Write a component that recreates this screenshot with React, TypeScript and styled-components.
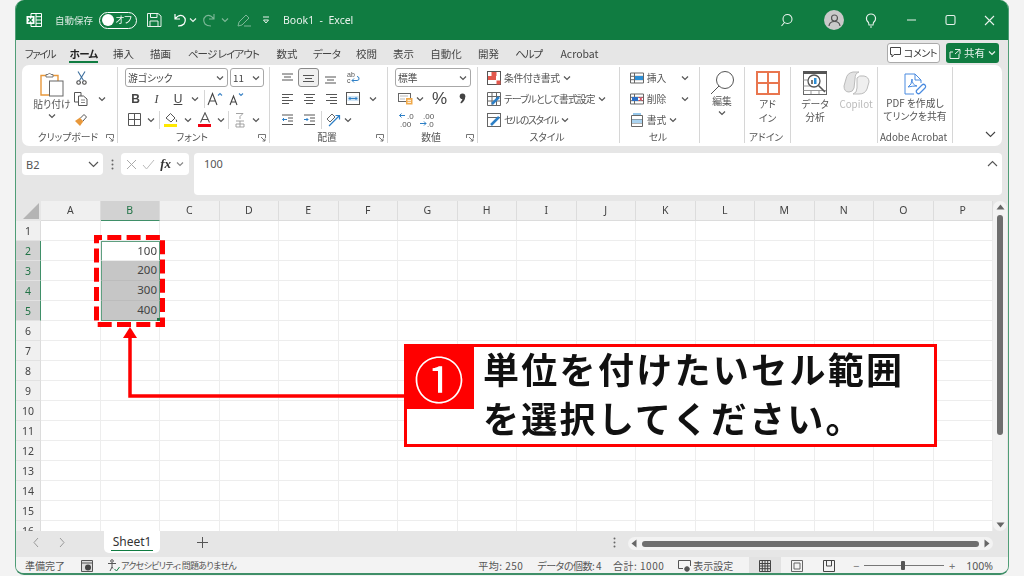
import React from "react";
import styled, { createGlobalStyle } from "styled-components";

const GlobalStyle = createGlobalStyle`
  html, body { margin: 0; padding: 0; width: 1024px; height: 576px; overflow: hidden; background: #f3f3f3; }
  body { font-family: "Noto Sans CJK JP", "Noto Sans", sans-serif; font-feature-settings: "palt"; color: #444; }
  * { box-sizing: border-box; }
`;

const Page = styled.div`position: relative; width: 1024px; height: 576px; overflow: hidden; padding-left: 15px;`;
const Win = styled.div`
  width: 994px; height: 575px; display: flex; flex-direction: column; background: #e6e6e6;
  border: 1px solid #4f9d76; border-top: none; border-bottom: 2px solid #3f8f68; border-radius: 9px; overflow: hidden;
  filter: blur(0.3px);
`;

/* title bar */
const TitleBar = styled.div`height: 40px; flex: none; background: #107c41; margin: 0 -1px; display: flex; align-items: center; color: #fff;`;
const TCell = styled.div<{ $w: number; $dim?: boolean }>`
  width: ${p => p.$w}px; flex: none; height: 40px; display: flex; align-items: center; justify-content: center; opacity: ${p => (p.$dim ? 0.45 : 1)};
`;
const TLabel = styled.span`font-size: 9.5px; color: #dcebe3; white-space: nowrap;`;
const TName = styled.span`font-family: "Noto Sans", sans-serif; font-size: 10.5px; color: #e8f2ec; white-space: pre; margin-left: 7px;`;
const Toggle = styled.div`
  width: 38px; height: 17px; border: 1px solid #fff; border-radius: 9px; display: flex; align-items: center; justify-content: space-between; padding: 0 4px 0 2px; flex: none;
`;
const Knob = styled.span`width: 12px; height: 12px; border-radius: 50%; background: #fff;`;
const ToggleText = styled.span`font-size: 9.5px; line-height: 1; color: #fff;`;
const TSpacer = styled.div`flex: 1;`;
const Avatar = styled.div`width: 20px; height: 20px; border-radius: 50%; background: #c9c9c9; display: flex; align-items: center; justify-content: center;`;

/* tabs */
const TabBar = styled.div`height: 25px; flex: none; display: flex; align-items: center; padding-left: 4px; background: #e6e6e6;`;
const Tab = styled.div<{ $w: number }>`width: ${p => p.$w}px; flex: none; text-align: center; white-space: nowrap; line-height: 25px;`;
const TabText = styled.span<{ $active?: boolean; $ls: number }>`
  position: relative; display: inline-block; font-size: 10.5px; letter-spacing: ${p => p.$ls}px;
  color: ${p => (p.$active ? "#222" : "#444")}; font-weight: ${p => (p.$active ? 700 : 400)};
  ${p => p.$active && `&::after { content: ""; position: absolute; left: 0; right: 0; bottom: 3px; height: 2px; background: #107c41; }`}
`;
const TabSpacer = styled.div`flex: 1;`;
const CommentBtn = styled.div`
  width: 53px; height: 20px; background: #fff; border: 1px solid #aaa; border-radius: 3px; display: flex; align-items: center; justify-content: center; gap: 3px; font-size: 10px; letter-spacing: -0.4px; color: #333;
`;
const ShareBtn = styled.div`
  width: 53px; height: 20px; margin: 0 9px 0 6px; background: #107c41; border-radius: 3px; display: flex; align-items: center; justify-content: center; gap: 3px; font-size: 10.5px; color: #e8f2ec;
`;

/* ribbon */
const Ribbon = styled.div`height: 81px; flex: none; margin: 0 6px; padding-top: 2px; background: #fff; border-radius: 7px; display: flex;`;
const Group = styled.div<{ $w: number }>`
  width: ${p => p.$w}px; flex: none; height: 76px; display: flex; flex-direction: column; border-right: 1px solid #d6d6d6;
`;
const GroupBody = styled.div<{ $left?: number }>`height: 63px; flex: none; display: flex; padding-left: ${p => p.$left ?? 0}px;`;
const Rows = styled.div`display: flex; flex-direction: column;`;
const Row = styled.div`height: 21px; display: flex; align-items: center;`;
const Cell = styled.div<{ $w: number; $on?: boolean }>`
  width: ${p => p.$w}px; height: 19px; flex: none; display: flex; align-items: center; justify-content: center;
  ${p => p.$on && "background: #f0f0f0; border: 1px solid #8a8a8a; border-radius: 3px;"}
`;
const Sep = styled.span`width: 1px; height: 18px; flex: none; background: #d6d6d6; margin: 0 1px;`;
const LabelRow = styled.div`display: grid; grid-template-columns: 1fr auto 1fr; align-items: center; height: 13px; margin-top: 1px; padding-right: 3px;`;
const GLabel = styled.span`grid-column: 2; font-size: 9.8px; line-height: 13px; color: #555; white-space: nowrap;`;
const Launcher = styled.span`grid-column: 3; justify-self: end; display: flex;`;
const Select = styled.div<{ $w: number }>`
  width: ${p => p.$w}px; height: 19px; flex: none; border: 1px solid #a8a8a8; border-radius: 3px; display: flex; align-items: center; justify-content: space-between;
  padding: 0 3px 0 2px; font-size: 9.8px; color: #444; margin-right: 2px;
`;
const BigCol = styled.div<{ $w: number; $top: number }>`width: ${p => p.$w}px; flex: none; display: flex; flex-direction: column; align-items: center; padding-top: ${p => p.$top}px;`;
const BigText = styled.div<{ $dim?: boolean; $gap: number; $lh?: number }>`
  font-size: 9.8px; line-height: ${p => p.$lh ?? 13}px; text-align: center; white-space: nowrap; color: ${p => (p.$dim ? "#bbb" : "#555")}; margin-top: ${p => p.$gap}px; margin-bottom: 2px;
`;
const StyleText = styled.span<{ $ls?: number }>`font-size: 9.8px; color: #555; white-space: nowrap; margin: 0 3px; letter-spacing: ${p => p.$ls ?? 0}px;`;
const ListIcon = styled.span`width: 14px; height: 14px; flex: none; display: flex;`;
const FmtGlyph = styled.span<{ $size: number; $serif?: boolean }>`
  font-family: ${p => (p.$serif ? '"Liberation Serif", serif' : '"Liberation Sans", sans-serif')}; font-size: ${p => p.$size}px; line-height: 1; color: #444;
`;
const BoldB = styled(FmtGlyph)`font-weight: 700;`;
const ItalicI = styled(FmtGlyph)`font-style: italic;`;
const UnderU = styled(FmtGlyph)`text-decoration: underline;`;
const CollapseCol = styled.div`flex: 1; display: flex; align-items: flex-end; justify-content: flex-end; padding: 0 6px 8px 0;`;

/* formula bar */
const FormulaBar = styled.div`height: 50px; flex: none; display: flex; padding: 7px 6px 0 6px; align-items: flex-start;`;
const NameBox = styled.div`width: 81px; height: 22px; background: #fff; border-radius: 4px; display: flex; align-items: center; justify-content: space-between; padding: 0 4px; font-size: 11px; color: #555; font-family: "Noto Sans", sans-serif;`;
const Dots = styled.div`width: 18px; height: 22px; display: flex; align-items: center; justify-content: center;`;
const FxBox = styled.div`width: 68px; height: 22px; background: #fff; border-radius: 4px; display: flex; align-items: center; justify-content: space-around; padding: 0 2px; margin-right: 5px;`;
const FxText = styled.span`font-family: "Liberation Serif", serif; font-style: italic; font-weight: 700; font-size: 13px; color: #333;`;
const FormulaInput = styled.div`flex: 1; height: 42px; background: #fff; border-radius: 4px; display: flex; justify-content: space-between; padding: 2px 4px 0 10px; font-size: 11px; line-height: 17px; color: #555; font-family: "Noto Sans", sans-serif;`;

/* sheet */
const SheetArea = styled.div`height: 330px; flex: none; margin-top: 5px; display: flex; background: #e6e6e6;`;
const SheetGrid = styled.div`
  width: 977px; flex: none; overflow: hidden; display: grid; grid-template-columns: 25px repeat(16, 59.5px); grid-auto-rows: 20px; background: #fff;
`;
const Corner = styled.div`background: #e6e6e6; display: flex; align-items: flex-end; justify-content: flex-end; padding: 0 2px 2px 0;`;
const ColHead = styled.div<{ $on?: boolean }>`
  background: ${p => (p.$on ? "#d2d2d2" : "#f0f0f0")}; border-right: 1px solid #dcdcdc; border-bottom: 1px solid ${p => (p.$on ? "#3f8f68" : "#dcdcdc")};
  color: ${p => (p.$on ? "#217346" : "#444")}; font-size: 10.5px; line-height: 18px; text-align: center; font-family: "Noto Sans", sans-serif;
`;
const RowHead = styled.div<{ $on?: boolean }>`
  background: ${p => (p.$on ? "#d2d2d2" : "#f0f0f0")}; border-right: 1px solid ${p => (p.$on ? "#3f8f68" : "#dcdcdc")}; border-bottom: 1px solid #e2e2e2;
  color: ${p => (p.$on ? "#217346" : "#444")}; font-size: 10.5px; line-height: 21px; text-align: center; font-family: "Noto Sans", sans-serif;
`;
const GridCell = styled.div<{ $kind?: "first" | "sel" | "plain"; $top?: boolean; $bottom?: boolean }>`
  position: relative; border-right: 1px solid #ededed; border-bottom: 1px solid #ededed; font-size: 11.5px; line-height: 18px; text-align: right; padding-right: 2px; color: #444;
  font-family: "Noto Sans", sans-serif;
  ${p => p.$kind === "sel" && "background: #c6c6c6; border-bottom-color: #bcbcbc;"}
  ${p => (p.$kind === "sel" || p.$kind === "first") && "border-left: 1px solid #5f9f80; border-right: 1px solid #5f9f80;"}
  ${p => p.$top && "border-top: 1px solid #5f9f80;"}
  ${p => p.$bottom && `border-bottom: 1px solid #5f9f80; &::after { content: ""; position: absolute; right: -1px; bottom: -1px; width: 3px; height: 3px; background: #217346; }`}
`;
const VScroll = styled.div`width: 14px; flex: none; background: #f3f3f3; border-radius: 7px; display: flex; flex-direction: column; align-items: center; padding-top: 3px;`;
const VThumb = styled.div`width: 6px; height: 220px; margin-top: 5px; border-radius: 3px; background: #6e6e6e;`;
const VGap = styled.div`flex: 1;`;

/* sheet tabs */
const SheetBar = styled.div`height: 26px; flex: none; display: flex; align-items: flex-start; background: #e6e6e6;`;
const NavCell = styled.div<{ $w: number; $ml?: number }>`width: ${p => p.$w}px; margin-left: ${p => p.$ml ?? 0}px; height: 22px; flex: none; display: flex; align-items: center; justify-content: center;`;
const SheetTab = styled.div`
  position: relative; width: 56px; height: 22px; margin-left: 2px; flex: none; background: #fff; border-radius: 0 0 5px 5px; text-align: center; font-family: "Noto Sans", sans-serif; font-size: 12px; line-height: 22px; color: #333;
  &::after { content: ""; position: absolute; left: 7px; right: 7px; bottom: 2px; height: 1.5px; background: #107c41; }
`;
const HScroll = styled.div`width: 365px; height: 13px; margin: 6px 0 0 4px; flex: none; background: #f3f3f3; border-radius: 7px; display: flex; align-items: center; justify-content: space-between; padding: 0 3px;`;
const HThumb = styled.div`width: 337px; height: 6px; border-radius: 3px; background: #6e6e6e;`;

/* status bar */
const StatusBar = styled.div`flex: 1; background: #f3f3f3; display: flex; align-items: center; padding-left: 9px; font-size: 10px; color: #555; white-space: nowrap;`;
const StatusText = styled.span<{ $ml?: number; $ls?: number; $size?: number }>`
  margin-left: ${p => p.$ml ?? 0}px; flex: none; letter-spacing: ${p => p.$ls ?? 0}px; font-size: ${p => p.$size ?? 10}px;
`;
const StatusIcon = styled.span<{ $ml: number }>`margin-left: ${p => p.$ml}px; display: flex; flex: none;`;
const StatusSpacer = styled.div`flex: 1;`;
const ViewBtn = styled.div<{ $on?: boolean }>`width: 32px; height: 17px; flex: none; display: flex; align-items: center; justify-content: center; background: ${p => (p.$on ? "#e2e2e2" : "transparent")};`;
const Zoom = styled.div`display: flex; align-items: center; margin-left: 7px;`;
const ZoomTrack = styled.div`position: relative; width: 80px; height: 1px; background: #777; margin: 0 4px;`;
const ZoomKnob = styled.span`position: absolute; left: 37px; top: -4px; width: 4px; height: 9px; background: #555; border-radius: 1px;`;
const ZoomMark = styled.span`font-size: 11px; color: #777; font-family: "Noto Sans", sans-serif; width: 8px; text-align: center;`;
const ZoomPct = styled.span`margin: 0 15px 0 10px; font-family: "Noto Sans", sans-serif; font-size: 10.5px;`;

/* overlays */
const Annotation = styled.svg`position: absolute; left: 0; top: 0; width: 1024px; height: 576px; pointer-events: none;`;
const Callout = styled.div`
  position: absolute; left: 404px; top: 344px; width: 533px; height: 102.5px; background: #fff; border: 3px solid #f00; filter: blur(0.25px);
`;
const Badge = styled.div`
  position: absolute; left: -3px; top: -3px; width: 70px; height: 65px; background: #f00; color: #fff; display: flex; align-items: center; justify-content: center;
  font-size: 50px; line-height: 1; font-weight: 400;
`;
const CalloutText = styled.div`
  position: absolute; left: 76px; top: -3px; font-size: 36px; line-height: 49px; letter-spacing: 2.3px; font-weight: 700; color: #111; white-space: nowrap; font-feature-settings: normal;
`;

const S = styled.svg`display: block; flex: none;`;
const IconText = styled.text`font-family: "Liberation Sans", sans-serif; font-size: 7px; fill: #555;`;
const IconTextBlue = styled.text`font-family: "Liberation Sans", sans-serif; font-size: 8px; fill: #555;`;

type IP = { c?: string };
const Chev = ({ c = "#555" }: IP) => (
  <S width="8" height="6" viewBox="0 0 8 6" fill="none" stroke={c} strokeWidth="1.2"><path d="M1 1.5 4 4.5 7 1.5" /></S>
);
const Launch = () => (
  <S width="8" height="8" viewBox="0 0 8 8" fill="none" stroke="#666" strokeWidth="0.9"><path d="M.5 4V.5H7.5V4M3 3 7 7M7 4.5V7H4.5" /></S>
);
const L = (d: string, w = 16, h = 14, c = "#4a4a4a", sw = 1) => (
  <S width={w} height={h} viewBox={`0 0 ${w} ${h}`} fill="none" stroke={c} strokeWidth={sw}><path d={d} /></S>
);

const ExcelIcon = () => (
  <S width="16" height="14" viewBox="0 0 16 14" fill="none">
    <path d="M5 .5H15.5V13.5H5Z M10 .5V13.5 M10 3.7H15.5 M10 7H15.5 M10 10.3H15.5" stroke="#fff" />
    <rect x="0.5" y="3" width="8" height="8" fill="#fff" />
    <path d="M2.5 4.8 6.5 9.2M6.5 4.8 2.5 9.2" stroke="#107c41" strokeWidth="1.3" />
  </S>
);
const Paste = () => (
  <S width="24" height="25" viewBox="0 0 24 25" fill="none">
    <path d="M1 3.5H18V23H1Z" stroke="#e8983b" strokeWidth="1.4" />
    <path d="M6 5V2.5H8A1.6 1.6 0 0 1 11 2.5H13V5Z" fill="#fff" stroke="#777" />
    <rect x="9.5" y="9" width="13.5" height="15" fill="#fff" stroke="#666" />
  </S>
);
const Scissors = () => (
  <S width="11" height="14" viewBox="0 0 11 14" fill="none" stroke="#3d6f9e" strokeWidth="1.1"><path d="M2 .5 7.5 9.5M9 .5 3.5 9.5" /><circle cx="2.6" cy="11.5" r="1.8" stroke="#444" /><circle cx="8.4" cy="11.5" r="1.8" stroke="#444" /></S>
);
const Copy = () => (
  <S width="14" height="14" viewBox="0 0 14 14" fill="none" stroke="#555"><path d="M.5 .5H7L7 10H.5Z" /><path d="M4.5 4H9.5L13 7V13.5H4.5Z" fill="#fff" /><path d="M7 8H11M7 10.5H11" stroke="#888" /></S>
);
const Brush = () => (
  <S width="14" height="14" viewBox="0 0 14 14"><path d="M1 8 6 13 9.5 8 6 4.5Z" fill="#e8983b" /><path d="M6.5 5 10 1.5 12.5 4 9 8" fill="#fff" stroke="#555" /></S>
);
const BorderIcon = () => L("M.5.5H12.5V12.5H.5ZM6.5.5V12.5M.5 6.5H12.5", 13, 13, "#555");
const FillIcon = () => (
  <S width="14" height="15" viewBox="0 0 14 15" fill="none"><path d="M2 6 6.5 1.5 11 6 7 10Z" stroke="#555" /><path d="M12 7.5Q13.5 9.5 12 10" stroke="#555" /><rect x="0" y="12" width="13" height="3" fill="#ffe800" /></S>
);
const ColorA = () => (
  <S width="14" height="15" viewBox="0 0 14 15" fill="none"><path d="M2.5 10.5 7 .8 11.5 10.5M4 7.5H10" stroke="#555" strokeWidth="1.1" /><rect x="0" y="12" width="13" height="3" fill="#f00010" /></S>
);
const Ruby = () => (
  <S width="12" height="16" viewBox="0 0 12 16" fill="none" stroke="#999" strokeWidth="0.9"><path d="M2 1.5H9L6 4.5V7M2 9H10M6 9V15M2 12H10V15H2Z" /></S>
);
const GrowA = ({ up }: { up: boolean }) => (
  <S width="17" height="14" viewBox="0 0 17 14" fill="none"><path d={up ? "M1 13 5.5 1.5 10 13M2.7 9H8.3" : "M2 13 5.5 4 9 13M3.2 10H7.8"} stroke="#444" strokeWidth="1.1" /><path d={up ? "M11 3.5 13 1.5 15 3.5" : "M11 1.5 13 3.5 15 1.5"} stroke="#3f86c7" strokeWidth="1.1" /></S>
);
const Lines = ({ kind }: { kind: string }) => {
  const d: Record<string, string> = {
    top: "M1 2H12M3 5H10M1 8H12",
    mid: "M1 3.5H12M3 6.5H10M1 9.5H12",
    bot: "M1 5H12M3 8H10M1 11H12",
    left: "M1 1.5H12M1 4.5H8M1 7.5H12M1 10.5H8",
    center: "M1 1.5H12M3 4.5H10M1 7.5H12M3 10.5H10",
    right: "M1 1.5H12M5 4.5H12M1 7.5H12M5 10.5H12",
  };
  return L(d[kind], 13, 12, "#555");
};
const Wrap = () => (
  <S width="15" height="16" viewBox="0 0 15 16" fill="none">
    <IconText x="1" y="6.5">ab</IconText>
    <IconText x="1" y="13">c</IconText>
    <path d="M6 10.5H11Q13.5 10.5 13 8 12.5 6.5 11 6.5M6 10.5 8 8.5M6 10.5 8 12.5" stroke="#2d7fc6" />
  </S>
);
const Merge = () => (
  <S width="14" height="13" viewBox="0 0 14 13" fill="none"><rect x=".5" y=".5" width="13" height="12" stroke="#555" /><rect x="1.5" y="4" width="11" height="5" fill="#cfe4f5" /><path d="M3 6.5H11M3 6.5 4.5 5M3 6.5 4.5 8M11 6.5 9.5 5M11 6.5 9.5 8" stroke="#2d7fc6" /></S>
);
const Indent = ({ inc }: { inc?: boolean }) => (
  <S width="13" height="12" viewBox="0 0 13 12" fill="none"><path d="M1 1H12M7 4H12M7 7H12M1 10.5H12" stroke="#555" /><path d={inc ? "M1 5.5H5M3.5 4 5 5.5 3.5 7" : "M6 5.5H1.5M3 4 1.5 5.5 3 7"} stroke="#2d7fc6" /></S>
);
const Orient = () => (
  <S width="15" height="14" viewBox="0 0 15 14" fill="none"><path d="M1 6 6 1 9 4 4 9Z" stroke="#666" /><path d="M3 13 13 3M9.5 2.5H13.5V6.5" stroke="#2d7fc6" strokeWidth="1.2" /></S>
);
const Accounting = () => (
  <S width="15" height="13" viewBox="0 0 15 13" fill="none"><rect x=".5" y="1.5" width="12" height="8" stroke="#666" /><path d="M2.5 4H10.5M2.5 7H7" stroke="#777" strokeDasharray="1 1" /><rect x="8" y="6" width="6.5" height="6.5" fill="#f0a94a" /><path d="M9.5 8.3H13M9.5 10.3H13" stroke="#fff" /></S>
);
const Comma = () => (
  <S width="7" height="11" viewBox="0 0 7 11"><circle cx="3.5" cy="3.2" r="2.8" fill="#444" /><path d="M6.2 3.5Q6.2 8 2 10.5L1.4 9.6Q3.5 7.5 3.6 5Z" fill="#444" /></S>
);
const DecimalLess = () => (
  <S width="17" height="16" viewBox="0 0 17 16" fill="none">
    <path d="M7 3.5H1.5M3.5 1.5 1.5 3.5 3.5 5.5" stroke="#2d7fc6" />
    <IconTextBlue x="9" y="7">.0</IconTextBlue>
    <IconTextBlue x="2" y="15">.00</IconTextBlue>
  </S>
);
const DecimalMore = () => (
  <S width="17" height="16" viewBox="0 0 17 16" fill="none">
    <IconTextBlue x="4" y="7">.00</IconTextBlue>
    <path d="M1 11.5H7M5 9.5 7 11.5 5 13.5" stroke="#2d7fc6" />
    <IconTextBlue x="8" y="15">.0</IconTextBlue>
  </S>
);
const Conditional = () => (
  <S width="14" height="14" viewBox="0 0 14 14" fill="none"><rect x=".5" y=".5" width="13" height="13" stroke="#555" /><rect x="4.5" y="1" width="5" height="4" fill="#e2574c" /><rect x="1" y="5" width="8" height="4" fill="#e2574c" /><rect x="9.5" y="9.5" width="4" height="4" fill="#e2574c" /></S>
);
const TableFmt = () => (
  <S width="14" height="14" viewBox="0 0 14 14" fill="none"><path d="M.5.5H13.5V13.5H.5ZM.5 4.5H13.5M.5 9H13.5M5 .5V13.5M9.5.5V13.5" stroke="#666" /><path d="M5 12 12 5" stroke="#2d7fc6" strokeWidth="2.5" /></S>
);
const CellStyle = () => (
  <S width="14" height="14" viewBox="0 0 14 14" fill="none"><rect x=".5" y=".5" width="13" height="13" stroke="#666" /><path d="M.5 4.5H13.5" stroke="#666" /><path d="M4 12 12 4" stroke="#2d7fc6" strokeWidth="2.5" /></S>
);
const InsertC = () => (
  <S width="14" height="14" viewBox="0 0 14 14" fill="none"><path d="M.5 2H13.5V12H.5ZM.5 5.3H13.5M.5 8.7H13.5M4.5 2V12" stroke="#666" /><rect x="5" y="5" width="8" height="4" fill="#2d8fd6" /></S>
);
const DeleteC = () => (
  <S width="14" height="14" viewBox="0 0 14 14" fill="none"><path d="M.5 2H13.5V12H.5ZM.5 5.3H13.5M.5 8.7H13.5M4.5 2V12" stroke="#666" /><rect x="2" y="5" width="6" height="4" fill="#2d6fc6" /><path d="M9 5 12.5 9M12.5 5 9 9" stroke="#e2354c" /></S>
);
const FormatC = () => (
  <S width="14" height="15" viewBox="0 0 14 15" fill="none"><path d="M1.5 2.5H12.5V13.5H1.5ZM1.5 6.5H12.5M1.5 10H12.5" stroke="#666" /><rect x="2" y="6.5" width="10" height="3.5" fill="#aad3f0" /><path d="M3 1H11" stroke="#2d8fd6" /></S>
);
const Magnifier = () => (
  <S width="25" height="25" viewBox="0 0 25 25" fill="none" stroke="#555" strokeWidth="1"><circle cx="15" cy="10" r="8.5" /><path d="M9 16 1 24" /></S>
);
const AddIn = () => (
  <S width="24" height="24" viewBox="0 0 24 24"><rect width="24" height="24" fill="#e9764f" /><g fill="#fff"><rect x="2" y="2" width="9" height="9" /><rect x="13" y="2" width="9" height="9" /><rect x="2" y="13" width="9" height="9" /><rect x="13" y="13" width="9" height="9" /></g></S>
);
const Analysis = () => (
  <S width="24" height="24" viewBox="0 0 24 24" fill="none"><rect x=".5" y=".5" width="23" height="23" stroke="#666" /><rect x="0" y="0" width="24" height="3" fill="#555" /><path d="M.5 9H5M.5 15H8M.5 19.5H23M8 19.5V23M16 19.5V23" stroke="#999" /><circle cx="11" cy="10" r="6" fill="#fff" stroke="#555" strokeWidth="1.3" /><path d="M15.5 14.5 22 21" stroke="#555" strokeWidth="1.6" /><rect x="8" y="9" width="2" height="4" fill="#777" /><rect x="11" y="7" width="2.5" height="6" fill="#2d8fd6" /></S>
);
const Copilot = () => (
  <S width="27" height="24" viewBox="0 0 27 24" fill="none" stroke="#bbb"><path d="M3 8Q4 2 10 1L16 1Q12 2 12 8L11 17Q10 21 6 21Q1 21 1 15Z" fill="#e3e3e3" /><path d="M14 7Q16 4 21 5Q26 6 26 11L24 18Q22 23 16 23H10Q14 22 14 17Z" fill="#efefef" /></S>
);
const PdfLink = () => (
  <S width="23" height="22" viewBox="0 0 23 22" fill="none" stroke="#4a8be0"><path d="M1 1H11L17 7V10M1 1V21H10M11 1V7H17" /><path d="M4 14Q8 12 8 6Q8 12 13 13Q8 13 4 14Z" /><path d="M12 18 18 12A2 2 0 0 1 21 15L16 20A2 2 0 0 1 13 17" strokeWidth="1.2" /></S>
);

const columns = ["A", "B", "C", "D", "E", "F", "G", "H", "I", "J", "K", "L", "M", "N", "O", "P"];
const values: Record<number, string> = { 2: "100", 3: "200", 4: "300", 5: "400" };
const rowNumbers = Array.from({ length: 16 }, (_, i) => i + 1);
const tabs: [string, number, number][] = [
  ["ファイル", 40, -1.5], ["ホーム", 47, -0.6], ["挿入", 33, 0], ["描画", 41, 0], ["ページ レイアウト", 85, -0.9], ["数式", 42, 0], ["データ", 37, -0.6], ["校閲", 43, 0],
  ["表示", 31, 0], ["自動化", 54, 0], ["開発", 31, 0], ["ヘルプ", 49, -1.2], ["Acrobat", 53, 0],
];

export default function App() {
  return (
    <Page>
      <GlobalStyle />
      <Win>
        <TitleBar>
          <TCell $w={11}><span /></TCell>
          <ExcelIcon />
          <TCell $w={13}><span /></TCell>
          <TLabel>自動保存</TLabel>
          <TCell $w={6}><span /></TCell>
          <Toggle><Knob /><ToggleText>オフ</ToggleText></Toggle>
          <TCell $w={34}>{L("M.5.5H11L14 3V13.5H.5ZM3.5.5V4.5H10V.5M3 13.5V8H11V13.5", 15, 14, "#e8f2ec")}</TCell>
          <TCell $w={16}>{L("M3 1V6H8M3 6Q7 1 11 3 15 6 12 11 10 13 6 13", 15, 14, "#fff", 1.2)}</TCell>
          <TCell $w={11}><Chev c="#e8f2ec" /></TCell>
          <TCell $w={22} $dim>{L("M12 1V6H7M12 6Q8 1 4 3 0 6 3 11 5 13 9 13", 15, 14, "#fff", 1.1)}</TCell>
          <TCell $w={10} $dim><Chev c="#fff" /></TCell>
          <TCell $w={26} $dim>{L("M2 13 3 9 10 2 13 5 6 12ZM8 13H15", 15, 14, "#fff")}</TCell>
          <TCell $w={20}>{L("M2 1H8M2.5 4H7.5L5 7Z", 10, 8, "#e8f2ec")}</TCell>
          <TName>Book1  -  Excel</TName>
          <TSpacer />
          <TCell $w={20}>{L("M11 6A4.5 4.5 0 1 0 2 6 4.5 4.5 0 0 0 11 6M3.5 9.5 0.5 13", 13, 14, "#e8f2ec", 1.1)}</TCell>
          <TCell $w={27}><span /></TCell>
          <Avatar>{L("M9.5 5A3 3 0 1 0 3.5 5 3 3 0 0 0 9.5 5M1 13Q1.5 8.5 6.5 8.5 11.5 8.5 12 13", 13, 14, "#555", 1.2)}</Avatar>
          <TCell $w={17}><span /></TCell>
          <TCell $w={20}>{L("M3.5 9.5Q1 7.5 1.5 4.5 2.5 1 6 1 9.5 1 10.5 4.5 11 7.5 8.5 9.5L8 12H4ZM5 14H7", 12, 15, "#e8f2ec", 1.1)}</TCell>
          <TCell $w={20}><span /></TCell>
          <TCell $w={20}>{L("M1 6H10", 11, 12, "#e8f2ec", 1.2)}</TCell>
          <TCell $w={19}><span /></TCell>
          <TCell $w={20}>{L("M2.5 1.5H8.5Q10 1.5 10 3V9Q10 10.5 8.5 10.5H2.5Q1 10.5 1 9V3Q1 1.5 2.5 1.5Z", 11, 12, "#e8f2ec", 1.1)}</TCell>
          <TCell $w={19}><span /></TCell>
          <TCell $w={20}>{L("M1 1 10 10M10 1 1 10", 11, 11, "#e8f2ec", 1.1)}</TCell>
          <TCell $w={10}><span /></TCell>
        </TitleBar>

        <TabBar>
          {tabs.map(([t, w, ls]) => (
            <Tab key={t} $w={w}><TabText $ls={ls} $active={t === "ホーム"}>{t}</TabText></Tab>
          ))}
          <TabSpacer />
          <CommentBtn>
            {L("M.5.5H10.5V7.5H4L2 10V7.5H.5Z", 11, 11, "#444")}
            コメント
          </CommentBtn>
          <ShareBtn>
            {L("M1 5H4M1 5V11.5H10V7M6 2.5H11V7M11 2.5 6 7", 12, 12, "#e8f2ec")}
            共有
            <Chev c="#e8f2ec" />
          </ShareBtn>
        </TabBar>

        <Ribbon>
          <Group $w={96}>
            <GroupBody $left={8}>
              <BigCol $w={44} $top={5}>
                <Paste />
                <BigText $gap={1}>貼り付け</BigText>
                <Chev />
              </BigCol>
              <Rows>
                <Row><Cell $w={14}><Scissors /></Cell></Row>
                <Row><Cell $w={14}><Copy /></Cell><Cell $w={28}><Chev /></Cell></Row>
                <Row><Cell $w={14}><Brush /></Cell></Row>
              </Rows>
            </GroupBody>
            <LabelRow><GLabel>クリップボード</GLabel><Launcher><Launch /></Launcher></LabelRow>
          </Group>

          <Group $w={152}>
            <GroupBody $left={7}>
              <Rows>
                <Row>
                  <Select $w={103}>游ゴシック<Chev /></Select>
                  <Select $w={34}>11<Chev /></Select>
                </Row>
                <Row>
                  <Cell $w={21}><BoldB $size={12}>B</BoldB></Cell>
                  <Cell $w={21}><ItalicI $size={12} $serif>I</ItalicI></Cell>
                  <Cell $w={22}><UnderU $size={12}>U</UnderU></Cell>
                  <Cell $w={11}><Chev /></Cell>
                  <Cell $w={3}><span /></Cell>
                  <Sep />
                  <Cell $w={18}><GrowA up /></Cell>
                  <Cell $w={25}><GrowA up={false} /></Cell>
                </Row>
                <Row>
                  <Cell $w={18}><BorderIcon /></Cell>
                  <Cell $w={15}><Chev /></Cell>
                  <Sep />
                  <Cell $w={20}><FillIcon /></Cell>
                  <Cell $w={14}><Chev /></Cell>
                  <Cell $w={20}><ColorA /></Cell>
                  <Cell $w={12}><Chev /></Cell>
                  <Sep />
                  <Cell $w={20}><Ruby /></Cell>
                  <Cell $w={12}><Chev /></Cell>
                </Row>
              </Rows>
            </GroupBody>
            <LabelRow><GLabel>フォント</GLabel><Launcher><Launch /></Launcher></LabelRow>
          </Group>

          <Group $w={118}>
            <GroupBody $left={7}>
              <Rows>
                <Row>
                  <Cell $w={21}><Lines kind="top" /></Cell>
                  <Cell $w={21} $on><Lines kind="mid" /></Cell>
                  <Cell $w={22}><Lines kind="bot" /></Cell>
                  <Cell $w={24}><Wrap /></Cell>
                </Row>
                <Row>
                  <Cell $w={21}><Lines kind="left" /></Cell>
                  <Cell $w={22}><Lines kind="center" /></Cell>
                  <Cell $w={22}><Lines kind="right" /></Cell>
                  <Cell $w={21}><Merge /></Cell>
                  <Cell $w={20}><Chev /></Cell>
                </Row>
                <Row>
                  <Cell $w={21}><Indent /></Cell>
                  <Cell $w={22}><Indent inc /></Cell>
                  <Sep />
                  <Cell $w={20}><Orient /></Cell>
                  <Cell $w={10}><Chev /></Cell>
                </Row>
              </Rows>
            </GroupBody>
            <LabelRow><GLabel>配置</GLabel><Launcher><Launch /></Launcher></LabelRow>
          </Group>

          <Group $w={90}>
            <GroupBody $left={7}>
              <Rows>
                <Row><Select $w={76}>標準<Chev /></Select></Row>
                <Row>
                  <Cell $w={20}><Accounting /></Cell>
                  <Cell $w={10}><Chev /></Cell>
                  <Cell $w={29}><FmtGlyph $size={17}>%</FmtGlyph></Cell>
                  <Cell $w={16}><Comma /></Cell>
                </Row>
                <Row>
                  <Cell $w={22}><DecimalLess /></Cell>
                  <Cell $w={20}><DecimalMore /></Cell>
                </Row>
              </Rows>
            </GroupBody>
            <LabelRow><GLabel>数値</GLabel><Launcher><Launch /></Launcher></LabelRow>
          </Group>

          <Group $w={142}>
            <GroupBody $left={9}>
              <Rows>
                <Row><ListIcon><Conditional /></ListIcon><StyleText $ls={-0.3}>条件付き書式</StyleText><Chev /></Row>
                <Row><ListIcon><TableFmt /></ListIcon><StyleText $ls={-0.9}>テーブルとして書式設定</StyleText><Chev /></Row>
                <Row><ListIcon><CellStyle /></ListIcon><StyleText $ls={-1.3}>セルのスタイル</StyleText><Chev /></Row>
              </Rows>
            </GroupBody>
            <LabelRow><GLabel>スタイル</GLabel></LabelRow>
          </Group>

          <Group $w={80}>
            <GroupBody $left={10}>
              <Rows>
                <Row><ListIcon><InsertC /></ListIcon><Cell $w={25}><StyleText>挿入</StyleText></Cell><Cell $w={32}><Chev /></Cell></Row>
                <Row><ListIcon><DeleteC /></ListIcon><Cell $w={25}><StyleText>削除</StyleText></Cell><Cell $w={32}><Chev /></Cell></Row>
                <Row><ListIcon><FormatC /></ListIcon><Cell $w={25}><StyleText>書式</StyleText></Cell><Chev /></Row>
              </Rows>
            </GroupBody>
            <LabelRow><GLabel>セル</GLabel></LabelRow>
          </Group>

          <Group $w={45}>
            <GroupBody>
              <BigCol $w={44} $top={3}>
                <Magnifier />
                <BigText $gap={0}>編集</BigText>
                <Chev />
              </BigCol>
            </GroupBody>
          </Group>

          <Group $w={46}>
            <GroupBody>
              <BigCol $w={45} $top={4}>
                <AddIn />
                <BigText $gap={2} $lh={14}>アド<br />イン</BigText>
              </BigCol>
            </GroupBody>
            <LabelRow><GLabel>アドイン</GLabel></LabelRow>
          </Group>

          <Group $w={87}>
            <GroupBody $left={1}>
              <BigCol $w={46} $top={4}>
                <Analysis />
                <BigText $gap={3} $lh={12.5}>データ<br />分析</BigText>
              </BigCol>
              <BigCol $w={36} $top={4}>
                <Copilot />
                <BigText $dim $gap={3} $lh={12.5}>Copilot</BigText>
              </BigCol>
            </GroupBody>
          </Group>

          <Group $w={75}>
            <GroupBody>
              <BigCol $w={74} $top={6}>
                <PdfLink />
                <BigText $gap={2} $lh={12.5}>PDF を作成し<br />てリンクを共有</BigText>
              </BigCol>
            </GroupBody>
            <LabelRow><GLabel>Adobe Acrobat</GLabel></LabelRow>
          </Group>

          <CollapseCol>
            <S width="11" height="7" viewBox="0 0 11 7" fill="none" stroke="#444" strokeWidth="1.1"><path d="M1 1 5.5 5.5 10 1" /></S>
          </CollapseCol>
        </Ribbon>

        <FormulaBar>
          <NameBox>B2<S width="11" height="7" viewBox="0 0 11 7" fill="none" stroke="#555" strokeWidth="1.2"><path d="M1 1 5.5 5.5 10 1" /></S></NameBox>
          <Dots><S width="3" height="11" viewBox="0 0 3 11" fill="#666"><circle cx="1.5" cy="1.5" r="1" /><circle cx="1.5" cy="5.5" r="1" /><circle cx="1.5" cy="9.5" r="1" /></S></Dots>
          <FxBox>
            {L("M1 1 10 10M10 1 1 10", 11, 11, "#aaa")}
            {L("M1 6 4.5 10 12 1", 13, 11, "#bbb")}
            <FxText>fx</FxText>
            <Chev c="#888" />
          </FxBox>
          <FormulaInput>
            100
            <S width="11" height="7" viewBox="0 0 11 7" fill="none" stroke="#555" strokeWidth="1.1" style={{ marginTop: 5 }}><path d="M1 6 5.5 1.5 10 6" /></S>
          </FormulaInput>
        </FormulaBar>

        <SheetArea>
          <SheetGrid>
            <Corner><S width="16" height="16" viewBox="0 0 16 16"><path d="M16 0V16H0Z" fill="#b4b4b4" /></S></Corner>
            {columns.map(c => <ColHead key={c} $on={c === "B"}>{c}</ColHead>)}
            {rowNumbers.map(r => (
              <React.Fragment key={r}>
                <RowHead $on={r >= 2 && r <= 5}>{r}</RowHead>
                {columns.map(c => {
                  const inB = c === "B" && values[r];
                  return (
                    <GridCell
                      key={c}
                      $kind={inB ? (r === 2 ? "first" : "sel") : "plain"}
                      $top={!!inB && r === 2}
                      $bottom={!!inB && r === 5}
                    >
                      {inB ? values[r] : ""}
                    </GridCell>
                  );
                })}
              </React.Fragment>
            ))}
          </SheetGrid>
          <VScroll>
            <S width="9" height="6" viewBox="0 0 9 6" fill="#666"><path d="M.5 5.5 4.5 .5 8.5 5.5Z" /></S>
            <VThumb />
            <VGap />
            <S width="9" height="6" viewBox="0 0 9 6" fill="#666" style={{ marginBottom: 3 }}><path d="M.5 .5 4.5 5.5 8.5 .5Z" /></S>
          </VScroll>
        </SheetArea>

        <SheetBar>
          <NavCell $w={26} $ml={7}>{L("M5 1 1 5.5 5 10", 6, 11, "#999")}</NavCell>
          <NavCell $w={26}>{L("M1 1 5 5.5 1 10", 6, 11, "#999")}</NavCell>
          <NavCell $w={27}><span /></NavCell>
          <SheetTab>Sheet1</SheetTab>
          <NavCell $w={84}>{L("M5.5 0V11M0 5.5H11", 11, 11, "#555")}</NavCell>
          <NavCell $w={360}><span /></NavCell>
          <NavCell $w={20}>
            <S width="3" height="11" viewBox="0 0 3 11" fill="#666"><circle cx="1.5" cy="1.5" r="1" /><circle cx="1.5" cy="5.5" r="1" /><circle cx="1.5" cy="9.5" r="1" /></S>
          </NavCell>
          <HScroll>
            <S width="6" height="9" viewBox="0 0 6 9" fill="#666"><path d="M5.5 .5V8.5L.5 4.5Z" /></S>
            <HThumb />
            <S width="6" height="9" viewBox="0 0 6 9" fill="#666"><path d="M.5 .5V8.5L5.5 4.5Z" /></S>
          </HScroll>
        </SheetBar>

        <StatusBar>
          <StatusText>準備完了</StatusText>
          <StatusIcon $ml={16}>
            <S width="12" height="12" viewBox="0 0 12 12"><path d="M.5 .5H11.5V11.5H.5ZM.5 3H11.5" fill="#ddd" stroke="#555" /><circle cx="7" cy="7.5" r="3" fill="#444" /></S>
          </StatusIcon>
          <StatusIcon $ml={14}>
            <S width="13" height="13" viewBox="0 0 13 13" fill="none" stroke="#555"><circle cx="5" cy="2" r="1.3" /><path d="M1 4.5H9M5 4.5V8L3 12M5 8 6 9.5" /><path d="M7.5 10 9.5 12 12.5 8" stroke="#107c41" /></S>
          </StatusIcon>
          <StatusText $ml={1} $size={9} $ls={-0.7}>アクセシビリティ: 問題ありません</StatusText>
          <StatusSpacer />
          <StatusText $ls={0.5}>平均: 250</StatusText>
          <StatusText $ml={14} $ls={-0.5}>データの個数: 4</StatusText>
          <StatusText $ml={12} $ls={0.5}>合計: 1000</StatusText>
          <StatusIcon $ml={14}>
            <S width="13" height="12" viewBox="0 0 13 12" fill="none" stroke="#555"><path d="M5 8.5H.5V.5H12.5V6" /><circle cx="9" cy="9" r="2.3" fill="#555" /></S>
          </StatusIcon>
          <StatusText $ml={2}>表示設定</StatusText>
          <StatusIcon $ml={16}><ViewBtn $on>{L("M.5.5H11.5V11.5H.5ZM.5 3.5H11.5M.5 6H11.5M.5 8.7H11.5M3.3.5V11.5M6 .5V11.5M8.7.5V11.5", 12, 12, "#444")}</ViewBtn></StatusIcon>
          <ViewBtn>{L("M.5.5H11.5V11.5H.5ZM3 3H9V9H3Z", 12, 12, "#666")}</ViewBtn>
          <ViewBtn>{L("M.5.5H11.5V11.5H.5ZM3.5.5V6H8.5V.5", 12, 12, "#444")}</ViewBtn>
          <Zoom>
            <ZoomMark>−</ZoomMark>
            <ZoomTrack><ZoomKnob /></ZoomTrack>
            <ZoomMark>+</ZoomMark>
            <ZoomPct>100%</ZoomPct>
          </Zoom>
        </StatusBar>
      </Win>

      <Annotation viewBox="0 0 1024 576" fill="none">
        <rect x="96.5" y="237.5" width="66" height="87" stroke="#f00" strokeWidth="5" strokeDasharray="14 5.3" strokeDashoffset="8.5" />
        <path d="M404 396H130V336" stroke="#f00" strokeWidth="3.5" />
        <path d="M130 327 123 338H137Z" fill="#f00" />
      </Annotation>
      <Callout>
        <Badge>①</Badge>
        <CalloutText>単位を付けたいセル範囲<br />を選択してください。</CalloutText>
      </Callout>
    </Page>
  );
}
